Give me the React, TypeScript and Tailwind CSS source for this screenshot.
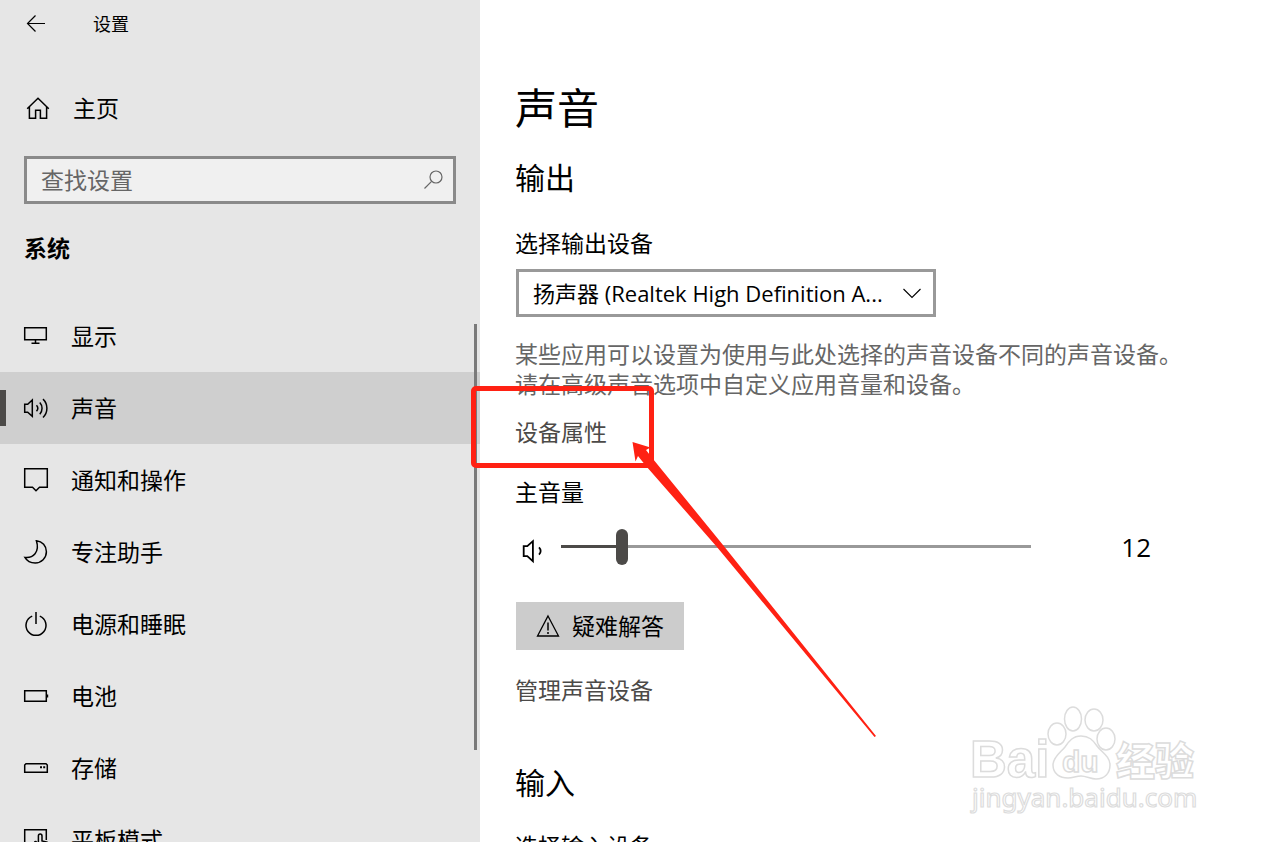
import React, { useState } from "react";
import { clsx } from "clsx";

type IconProps = { className?: string; children: React.ReactNode };

function Icon({ className, children }: IconProps) {
  return (
    <svg
      viewBox="0 0 24 24"
      fill="none"
      stroke="currentColor"
      strokeWidth="1.5"
      aria-hidden="true"
      className={clsx("h-6 w-6 shrink-0 overflow-visible", className)}
    >
      {children}
    </svg>
  );
}

const NAV_ITEMS = [
  {
    label: "显示",
    icon: <path d="M.7 3.7h21.6v12.1H.7zM11.500 15.800v3.500M7.500 19.300h8" />,
  },
  {
    label: "声音",
    icon: (
      <path d="M.7 8.2h3L8.3 4v16.400l-4.600-4.200h-3zM12.500 9.300c1.600 1.800 1.600 4.200 0 6M15.800 6.400c3 3.400 3 8.400 0 11.800M19 3.100c5.200 5 5.200 13.400 0 18.400" />
    ),
  },
  {
    label: "通知和操作",
    icon: <path d="M.7.7h22.6v18.6h-7.8L12 22.800l-3.500-3.500H.7z" />,
  },
  {
    label: "专注助手",
    icon: <path d="M12.400.8c6 .6 10 5.200 10 11 0 6.200-5 11.200-11.200 11.200-4.600 0-8.400-2.200-10.300-5.600C9 18.400 16 12 12.400.8z" />,
  },
  {
    label: "电源和睡眠",
    icon: <path d="M12 0v12M8.200 4.100a10 10 0 1 0 7.600 0" />,
  },
  {
    label: "电池",
    icon: (
      <>
        <path d="M.7 6.700h21.600v10.600H.7z" />
        <path d="M23.200 10.500v3" strokeWidth="2" />
      </>
    ),
  },
  {
    label: "存储",
    icon: (
      <>
        <path d="M2 7.700h20l1.300 1.300v7.300H.7V9z" />
        <path d="M16 11.200h2M19.200 11.200h2" strokeWidth="2" />
      </>
    ),
  },
  {
    label: "平板模式",
    icon: (
      <>
        <path d="M10 20.300H.7V1.700h21.600V12" />
        <path d="M18 13V8c0-2.600-3.600-2.600-3.600 0v8l-2.600-2.600c-1.500 0-1.500 1.500-.8 2.600l5 7h7v-9z" />
      </>
    ),
  },
];

function Sidebar() {
  const [active, setActive] = useState("声音");

  return (
    <aside className="flex w-[480px] shrink-0 flex-col bg-[#e6e6e6]">
      <header className="flex h-12 items-center gap-[45px] pl-6">
        <button type="button" aria-label="返回">
          <Icon>
            <path d="M21 11.500H3.500M11.500 3.500l-8 8 8 8" strokeWidth="1.200" />
          </Icon>
        </button>
        <span className="text-[18px]">设置</span>
      </header>

      <a href="#home" className="mt-9 flex h-12 items-center gap-[23px] pl-[26px]">
        <Icon>
          <path d="M1.200 12.800L12 2.300l10.800 10.500M3.400 11v11.300h6.200v-8h4.800v8h6.200V11" />
        </Icon>
        主页
      </a>

      <div className="mx-6 mt-6 flex h-12 items-center border-[3px] border-[#8a8a8a] bg-[#f0f0f0] pr-2 pl-3.5 text-[#666]">
        <input
          type="text"
          aria-label="查找设置"
          placeholder="查找设置"
          className="min-w-0 flex-1 bg-transparent outline-none placeholder:text-[#666]"
        />
        <Icon>
          <circle cx="15" cy="9" r="6" strokeWidth="1.200" />
          <path d="M10.600 13.400L3.500 20.500" strokeWidth="1.200" />
        </Icon>
      </div>

      <h2 className="mt-6 h-10 pl-6 leading-[40px] font-bold">系统</h2>

      <nav className="relative mt-8 min-h-0 flex-1 overflow-hidden">
        {NAV_ITEMS.map(({ label, icon }) => (
          <a
            key={label}
            href={`#${label}`}
            onClick={() => setActive(label)}
            className={clsx(
              "relative flex h-[72px] items-center gap-[23px] pl-6",
              label === active && "bg-[#cfcfcf]",
            )}
          >
            {label === active && <span className="absolute left-0 h-9 w-1.5 bg-[#4c4a48]" />}
            <Icon>{icon}</Icon>
            {label}
          </a>
        ))}
        <div className="absolute top-6 right-[3px] h-[426px] w-[3px] bg-[#7a7a7a]" />
      </nav>
    </aside>
  );
}

function VolumeSlider() {
  const [volume, setVolume] = useState(12);
  const fill = `calc(6px + (100% - 12px) * ${volume / 100})`;

  return (
    <div className="mt-4 flex h-12 max-w-[635px] items-center">
      <Icon className="mt-2 ml-1.5">
        <path d="M1.700 7.200h3.600l5.600-5v20l-5.600-5H1.700zM17 8.300c2.200 2.200 2.200 5.200 0 7.400" strokeWidth="1.800" />
      </Icon>
      <div className="relative ml-[15px] flex h-9 min-w-0 flex-1 items-center">
        <div className="absolute inset-x-0 top-4 h-[3px] bg-[#999]" />
        <div className="absolute top-4 left-0 h-[3px] bg-[#4c4a48]" style={{ width: fill }} />
        <input
          id="volume"
          type="range"
          min={0}
          max={100}
          value={volume}
          onChange={(e) => setVolume(Number(e.target.value))}
          className="relative h-9 w-full appearance-none bg-transparent [&::-webkit-slider-thumb]:h-9 [&::-webkit-slider-thumb]:w-3 [&::-webkit-slider-thumb]:appearance-none [&::-webkit-slider-thumb]:rounded-full [&::-webkit-slider-thumb]:bg-[#4c4a48]"
        />
      </div>
      <output htmlFor="volume" className="w-[120px] text-right text-[26px]">
        {volume}
      </output>
    </div>
  );
}

function Watermark() {
  return (
    <svg
      viewBox="0 0 240 120"
      fill="#fff"
      stroke="#dcdcdc"
      strokeWidth="1.500"
      className="pointer-events-none absolute top-[700px] left-[485px] h-[120px] w-[240px]"
    >
      <ellipse cx="92" cy="34" rx="9" ry="11" />
      <ellipse cx="108" cy="19" rx="8.500" ry="12" />
      <ellipse cx="129" cy="20" rx="9" ry="11" />
      <ellipse cx="141" cy="39" rx="9" ry="11" />
      <path d="M116 36c-8 0-12 5-16 11-4 5-12 10-12 18 0 9 7 13 15 13 5 0 8-2 13-2s10 3 15 3c9 0 14-6 14-14 0-9-9-13-13-19-4-6-8-10-16-10z" />
      <g className="font-['Liberation_Sans',sans-serif] font-bold">
        <text x="5" y="77" fontSize="51">
          Bai
        </text>
        <text x="97" y="72" fontSize="30">
          du
        </text>
      </g>
      <text x="151" y="75" fontSize="39" className="font-['Noto_Sans_CJK_SC',sans-serif] font-black">
        经验
      </text>
      <text x="7" y="107" fontSize="26" strokeWidth="1.200" className="font-['Noto_Sans',sans-serif]">
        jingyan.baidu.com
      </text>
    </svg>
  );
}

function Annotation() {
  return (
    <div className="pointer-events-none absolute inset-0">
      <div className="absolute top-[386px] left-[-9px] h-[82px] w-[183px] rounded-[5px] border-[5px] border-[#ff2113]" />
      <svg viewBox="0 0 246 296" fill="#ff2113" className="absolute top-[442px] left-[152px] h-[296px] w-[246px]">
        <path d="M.5 0L18.500 5.500 14 8l7 9L91 103l153 191-1.500 1L84.500 104.500 14 24 6 14 3.500 19.500z" />
      </svg>
    </div>
  );
}

export default function App() {
  return (
    <div className="flex h-screen overflow-hidden bg-white font-['Open_Sans','Noto_Sans_CJK_SC',sans-serif] text-[23px] leading-[30px] text-black">
      <Sidebar />
      <main className="relative min-w-0 flex-1 pt-20 pl-[35px]">
        <h1 className="text-[42px] leading-[56px]">声音</h1>

        <h2 className="mt-[18px] text-[30px] leading-[48px]">输出</h2>
        <label htmlFor="output" className="mt-[26px] block">
          选择输出设备
        </label>
        <div className="relative mt-[11px] ml-px w-[420px] max-w-full">
          <select
            id="output"
            className="h-12 w-full appearance-none border-[3px] border-[#999] bg-white pl-3.5 text-[22px]"
          >
            <option>扬声器 (Realtek High Definition A...</option>
          </select>
          <Icon className="pointer-events-none absolute top-3 right-3">
            <path d="M3.500 8l8.500 8.500L20.500 8" strokeWidth="1.100" />
          </Icon>
        </div>

        <p className="mt-[22px] text-[#666]">
          某些应用可以设置为使用与此处选择的声音设备不同的声音设备。
          <br />
          请在高级声音选项中自定义应用音量和设备。
        </p>
        <a href="#properties" className="mt-[18px] block text-[#4c4a48]">
          设备属性
        </a>

        <label htmlFor="volume" className="mt-[30px] block">
          主音量
        </label>
        <div className="pl-px">
          <VolumeSlider />
        </div>

        <button type="button" className="mt-[31px] ml-px flex h-12 w-[168px] items-center gap-3 bg-[#ccc] pl-5">
          <Icon>
            <path d="M12 2L22.500 22h-21z" strokeWidth="1.300" />
            <path d="M12 8.500v8M12 18v2" />
          </Icon>
          疑难解答
        </button>
        <a href="#manage" className="mt-[25px] block text-[#4c4a48]">
          管理声音设备
        </a>

        <h2 className="mt-[54px] text-[30px] leading-[48px]">输入</h2>
        <p className="mt-6">选择输入设备</p>

        <Watermark />
        <Annotation />
      </main>
    </div>
  );
}
